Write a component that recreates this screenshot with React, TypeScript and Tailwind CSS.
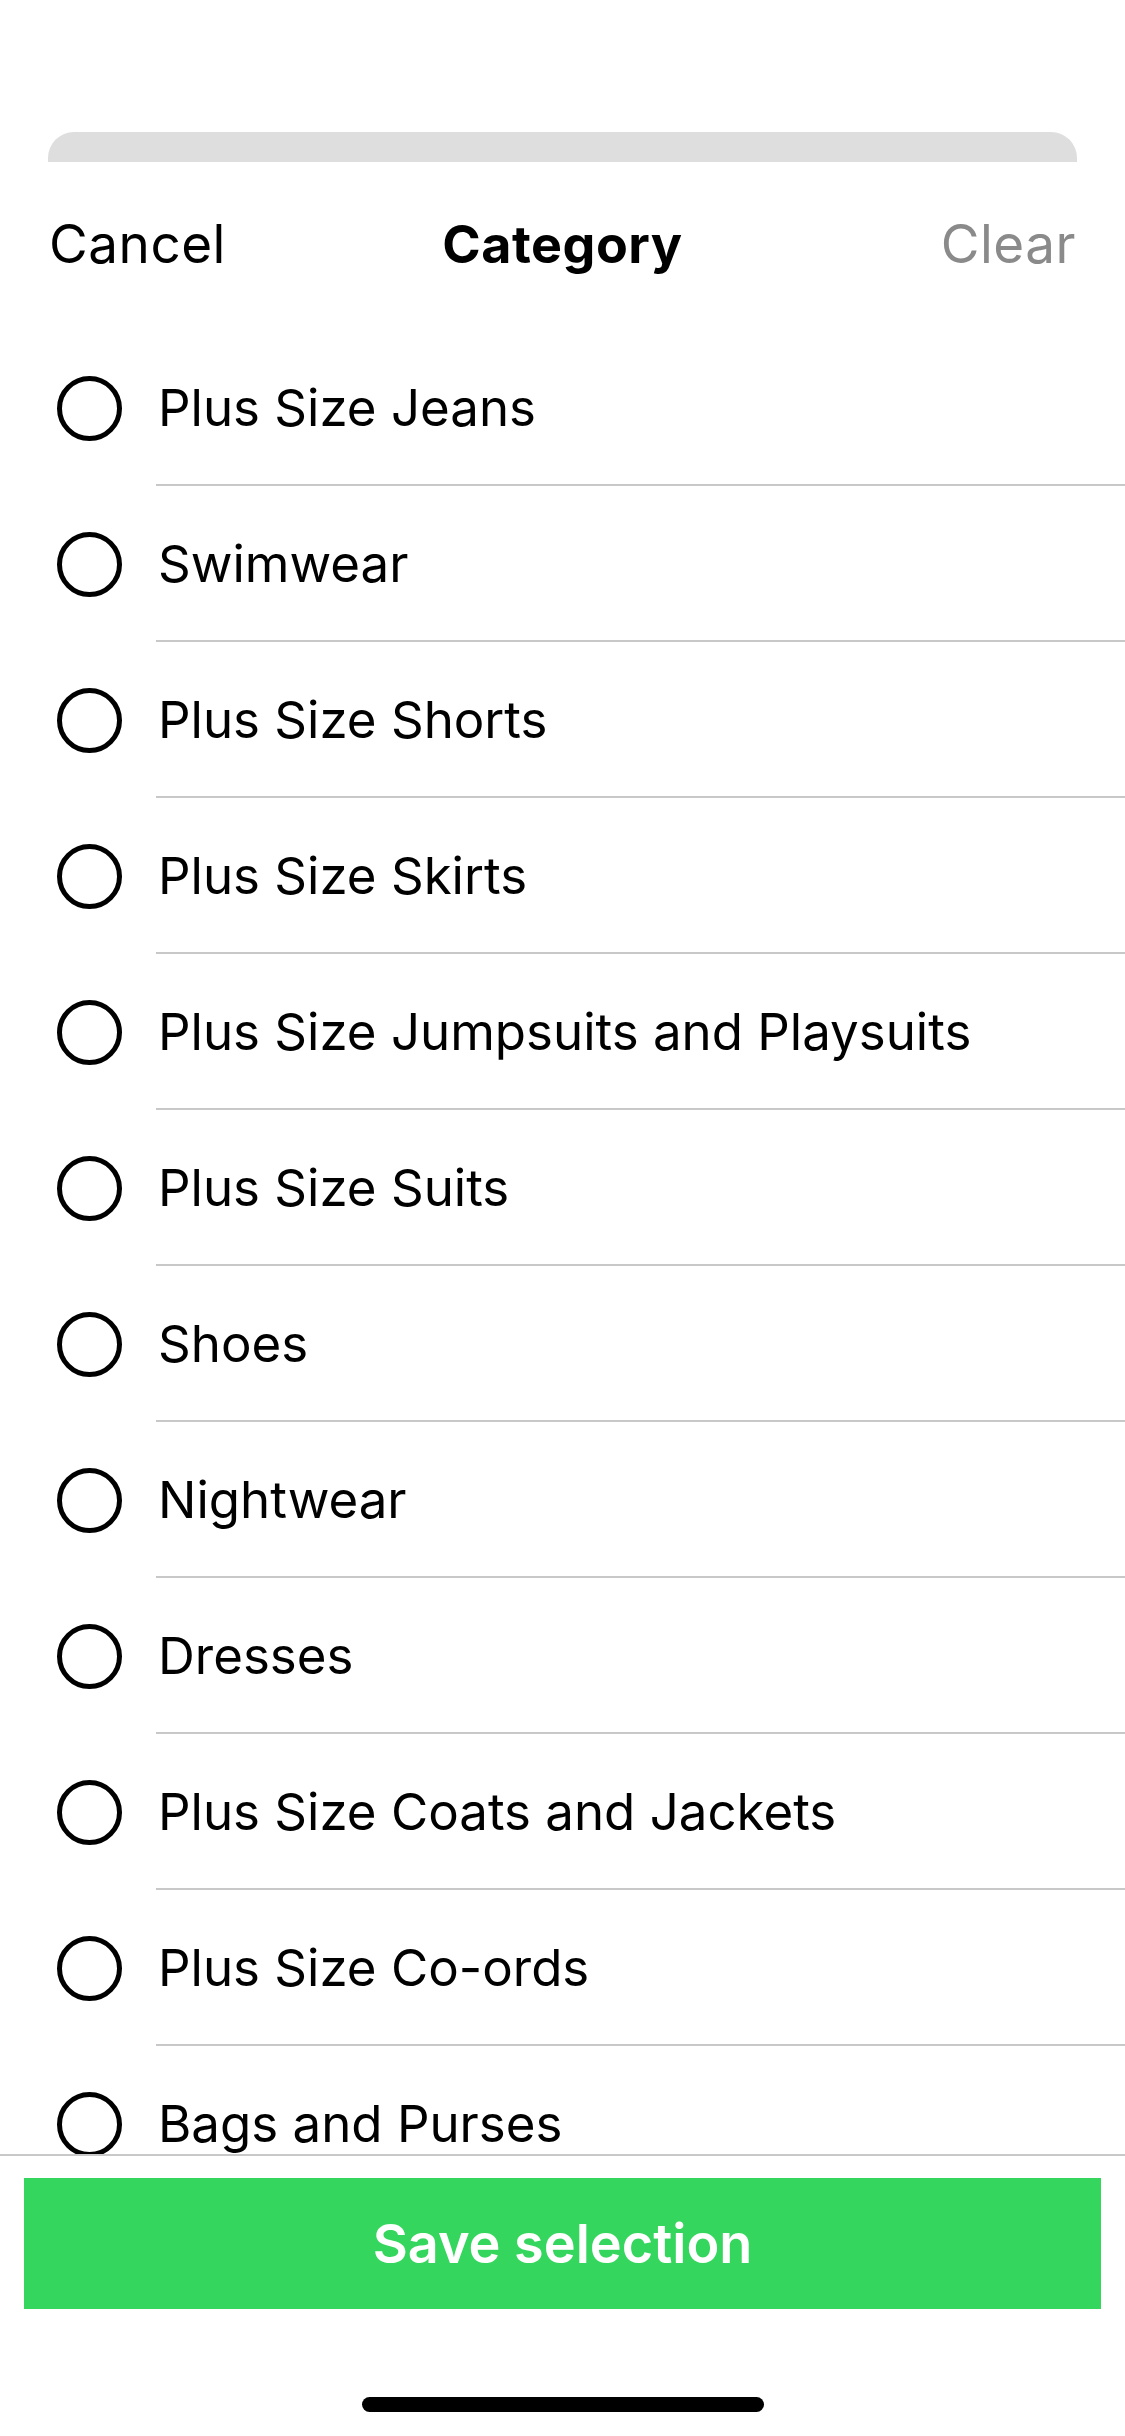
import React from "react";

const items = [
  "Plus Size Jeans",
  "Swimwear",
  "Plus Size Shorts",
  "Plus Size Skirts",
  "Plus Size Jumpsuits and Playsuits",
  "Plus Size Suits",
  "Shoes",
  "Nightwear",
  "Dresses",
  "Plus Size Coats and Jackets",
  "Plus Size Co-ords",
  "Bags and Purses",
];

export default function App() {
  return (
    <div
      className="relative flex h-[2436px] w-full flex-col overflow-hidden bg-white text-black"
      style={{ fontFamily: "Inter, 'Noto Sans', sans-serif" }}
    >
      <div className="h-[132px] shrink-0" />
      <div className="mx-[48px] h-[30px] shrink-0 rounded-t-[26px] bg-[#dedede]" />
      <div className="grid h-[168px] shrink-0 grid-cols-[1fr_auto_1fr] items-center px-[49px] pb-[2px]">
        <div className="justify-self-start text-[53px] font-normal tracking-[0.01em] text-black">Cancel</div>
        <div className="text-[52px] font-bold tracking-[0.01em] text-black">Category</div>
        <div className="justify-self-end text-[53px] font-normal tracking-[0.01em] text-[#8a8a8a]">Clear</div>
      </div>
      <div className="min-h-0 flex-1 overflow-hidden">
        {items.map((label) => (
          <div key={label} className="flex h-[156px] items-stretch">
            <div className="flex w-[156px] shrink-0 items-center pl-[57px] pt-[1px]">
              <div className="h-[65px] w-[65px] rounded-full border-[5px] border-black" />
            </div>
            <div className="flex flex-1 items-center border-b-2 border-[#c8c8c8] pl-[2px]">
              <span className="text-[51px] font-normal leading-none text-black">{label}</span>
            </div>
          </div>
        ))}
      </div>
      <div className="flex h-[282px] shrink-0 flex-col border-t-2 border-[#c8c8c8] px-[24px] pt-[22px]">
        <button className="flex h-[131px] w-full items-center justify-center bg-[#35d65d] text-[54px] font-semibold text-white">
          Save selection
        </button>
        <div className="mt-[88px] flex justify-center">
          <div className="h-[15px] w-[402px] rounded-full bg-black" />
        </div>
      </div>
    </div>
  );
}
